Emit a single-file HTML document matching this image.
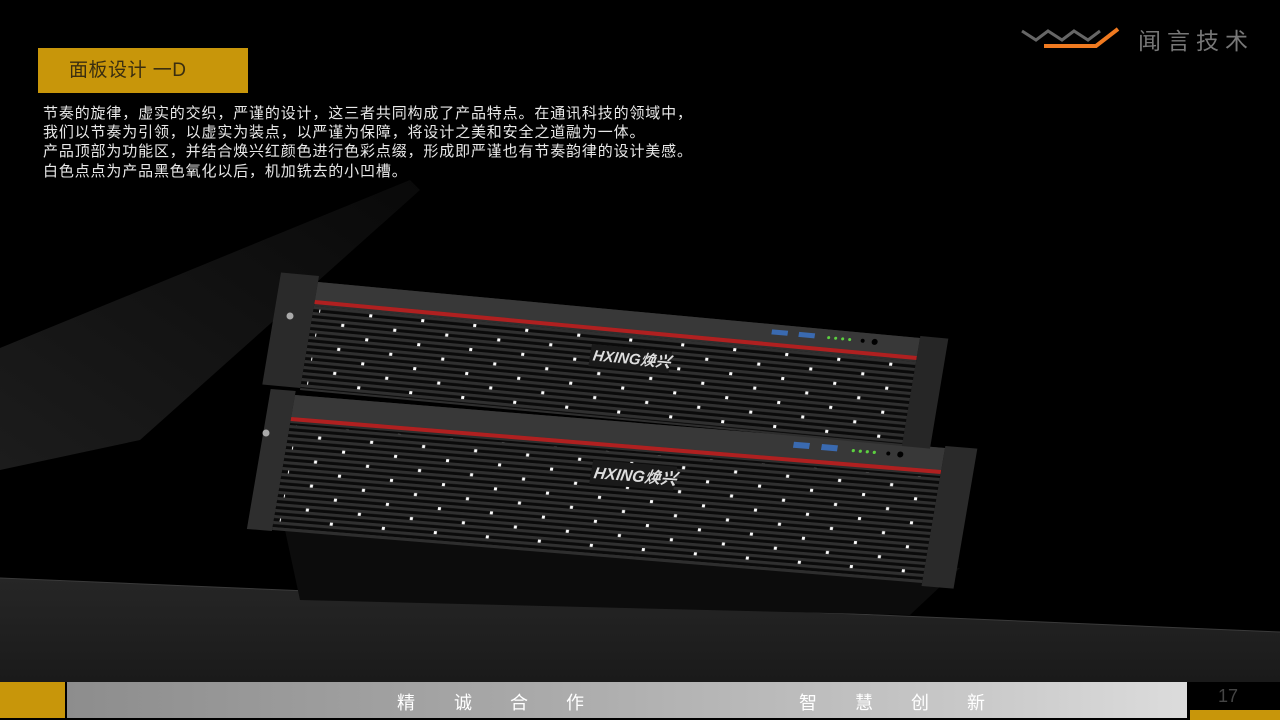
<!DOCTYPE html>
<html><head><meta charset="utf-8"><style>
html,body{margin:0;padding:0;background:#000;}
body{width:1280px;height:720px;position:relative;overflow:hidden;font-family:"Liberation Sans","Noto Sans CJK SC",sans-serif;}
.title{position:absolute;left:38px;top:48px;width:210px;height:45px;background:#c8960a;color:#3a2e10;font-size:19px;line-height:45px;box-sizing:border-box;padding-left:31px;letter-spacing:0.5px;}
.txt{position:absolute;left:43px;top:104px;color:#e8e8e8;font-size:15px;letter-spacing:0.85px;line-height:19.2px;white-space:nowrap;}
.brand{position:absolute;left:1138px;top:22px;color:#777;font-size:23px;letter-spacing:6px;}
.foot-gold{position:absolute;left:0;top:682px;width:65px;height:36px;background:#c8960a;}
.foot-bar{position:absolute;left:67px;top:682px;width:1120px;height:36px;background:linear-gradient(90deg,#8d8d8d,#a8a8a8 40%,#c8c8c8 80%,#dcdcdc);}
.foot-bar span{position:absolute;top:7px;color:#fff;font-size:18px;}
.pg{position:absolute;left:1218px;top:686px;color:#444;font-size:18px;}
.pgbar{position:absolute;left:1190px;top:710px;width:90px;height:10px;background:#c8960a;}
</style></head><body>
<svg width="1280" height="720" style="position:absolute;left:0;top:0">
<defs>
<linearGradient id="beam" x1="0" y1="1" x2="1" y2="0"><stop offset="0" stop-color="#1c1c1c"/><stop offset="1" stop-color="#090909"/></linearGradient>
<linearGradient id="floor" x1="0" y1="0" x2="0" y2="1"><stop offset="0" stop-color="#262626"/><stop offset="1" stop-color="#1a1a1a"/></linearGradient>
<pattern id="ribs" width="10" height="6" patternUnits="userSpaceOnUse"><rect width="10" height="6" fill="#0a0a0a"/><rect width="10" height="3" fill="#303030"/></pattern>
<pattern id="dots" width="52" height="24" patternUnits="userSpaceOnUse"><rect x="4" y="3" width="3" height="3" fill="#fff"/><rect x="30" y="15" width="3" height="3" fill="#fff"/></pattern>
</defs>
<polygon points="0,348 410,180 420,190 140,440 0,470" fill="url(#beam)"/>
<polygon points="0,578 1280,632 1280,682 0,682" fill="url(#floor)"/>
<line x1="0" y1="578" x2="1280" y2="632" stroke="#3a3a3a" stroke-width="1"/>
<!-- chassis below -->
<polygon points="285,530 960,568 910,615 300,600" fill="#0c0c0c"/>
<!-- bottom unit -->
<g transform="matrix(1,0.0815,-0.17,1,295,395)">
<rect x="-25" y="-4" width="25" height="140" fill="#2e2e2e"/>
<rect x="0" y="0" width="650" height="135" fill="#2e2e2e"/>
<rect x="0" y="0" width="650" height="22" fill="#383838"/>
<rect x="0" y="22" width="650" height="4" fill="#b02020"/>
<rect x="0" y="28" width="650" height="104" fill="url(#ribs)"/>
<rect x="6" y="30" width="640" height="100" fill="url(#dots)"/>
<rect x="650" y="-2" width="32" height="140" fill="#2a2a2a"/>
<rect x="500" y="6" width="16" height="6" fill="#3a6ab0"/><rect x="528" y="6" width="16" height="6" fill="#3a6ab0"/>
<g fill="#5cd040"><circle cx="560" cy="10" r="1.6"/><circle cx="567" cy="10" r="1.6"/><circle cx="574" cy="10" r="1.6"/><circle cx="581" cy="10" r="1.6"/></g>
<circle cx="595" cy="10" r="2" fill="#000"/><circle cx="607" cy="10" r="3" fill="#000"/>
<rect x="305" y="40" width="84" height="24" fill="#1a1a1a"/>
<text x="308" y="58" fill="#ddd" font-size="16" font-style="italic" font-weight="bold" font-family="Liberation Sans, Noto Sans CJK SC, sans-serif">HXING焕兴</text>
</g>
<!-- top unit -->
<g transform="matrix(1,0.093,-0.167,1,318,282)">
<rect x="-38" y="-6" width="38" height="112" fill="#2a2a2a"/>
<rect x="0" y="0" width="602" height="108" fill="#2e2e2e"/>
<rect x="0" y="0" width="602" height="18" fill="#383838"/>
<rect x="0" y="18" width="602" height="4" fill="#b02020"/>
<rect x="0" y="24" width="602" height="82" fill="url(#ribs)"/>
<rect x="6" y="26" width="592" height="78" fill="url(#dots)"/>
<rect x="602" y="-2" width="28" height="110" fill="#262626"/>
<rect x="455" y="5" width="16" height="5" fill="#3a6ab0"/><rect x="482" y="5" width="16" height="5" fill="#3a6ab0"/>
<g fill="#5cd040"><circle cx="512" cy="8" r="1.5"/><circle cx="519" cy="8" r="1.5"/><circle cx="526" cy="8" r="1.5"/><circle cx="533" cy="8" r="1.5"/></g>
<circle cx="546" cy="8" r="2" fill="#000"/><circle cx="558" cy="8" r="3" fill="#000"/>
<rect x="280" y="36" width="80" height="22" fill="#1a1a1a"/>
<text x="283" y="52" fill="#ddd" font-size="15" font-style="italic" font-weight="bold" font-family="Liberation Sans, Noto Sans CJK SC, sans-serif">HXING焕兴</text>
</g>
<circle cx="290" cy="316" r="3.5" fill="#aaa"/><circle cx="266" cy="433" r="3.5" fill="#aaa"/>
<!-- logo -->
<polyline points="1022,31 1036,40 1048,31 1062,40 1074,31 1088,40 1100,31" fill="none" stroke="#666" stroke-width="3"/>
<polyline points="1044,46 1096,46 1118,29" fill="none" stroke="#f07a20" stroke-width="4"/>
</svg>
<div class="title">面板设计 一D</div>
<div class="txt">节奏的旋律，虚实的交织，严谨的设计，这三者共同构成了产品特点。在通讯科技的领域中，<br>我们以节奏为引领，以虚实为装点，以严谨为保障，将设计之美和安全之道融为一体。<br>产品顶部为功能区，并结合焕兴红颜色进行色彩点缀，形成即严谨也有节奏韵律的设计美感。<br>白色点点为产品黑色氧化以后，机加铣去的小凹槽。</div>
<div class="brand">闻言技术</div>
<div class="foot-gold"></div>
<div class="foot-bar"><span style="left:330px">精</span><span style="left:387px">诚</span><span style="left:443px">合</span><span style="left:499px">作</span><span style="left:732px">智</span><span style="left:788px">慧</span><span style="left:844px">创</span><span style="left:900px">新</span></div>
<div class="pg">17</div>
<div class="pgbar"></div>
</body></html>
